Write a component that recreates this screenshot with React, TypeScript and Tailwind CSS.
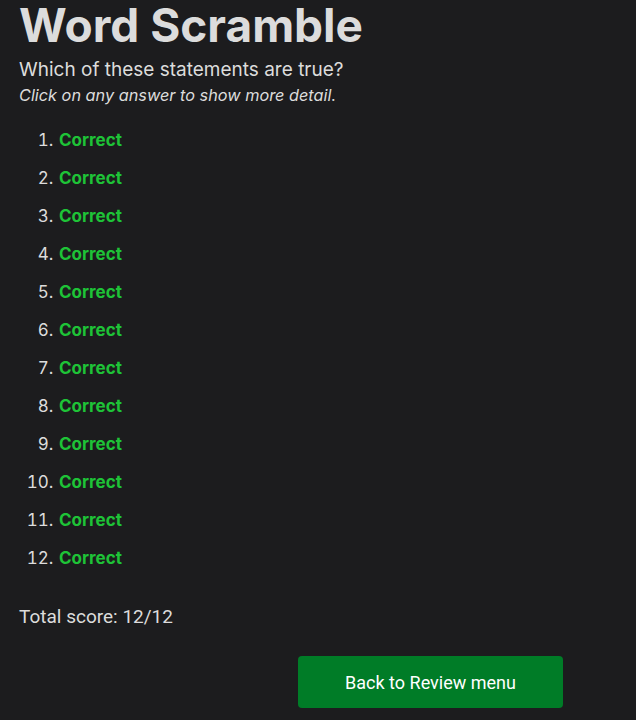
export default function App() {
  const items = Array.from({ length: 12 }, (_, i) => i + 1);

  return (
    <div className="min-h-[720px] bg-[#1c1c1e] text-[#dcdcdc] px-[19px] font-['Inter',sans-serif]">
      <h1 className="text-[46px] font-bold leading-[48px] pt-[1px]">Word Scramble</h1>
      <p className="text-[19px] leading-[24px] mt-[9px]">Which of these statements are true?</p>
      <p className="text-[16.3px] leading-[24px] italic mt-[1px]">Click on any answer to show more detail.</p>

      <ol className="list-decimal pl-[39px] mt-[21px] text-[17px]">
        {items.map((n) => (
          <li key={n} className="leading-[24px] mb-[14px] pl-[1px]">
            <span className="font-bold text-[#1ec337]">Correct</span>
          </li>
        ))}
      </ol>

      <p className="font-['Roboto',sans-serif] text-[19px] leading-[24px] mt-[35px]">Total score: 12/12</p>

      <div className="flex justify-center mt-[27px]">
        <button className="w-[265px] h-[52px] ml-[225px] rounded-[4px] bg-[#007c27] text-white font-['Roboto',sans-serif] text-[18px]">
          Back to Review menu
        </button>
      </div>
    </div>
  );
}
